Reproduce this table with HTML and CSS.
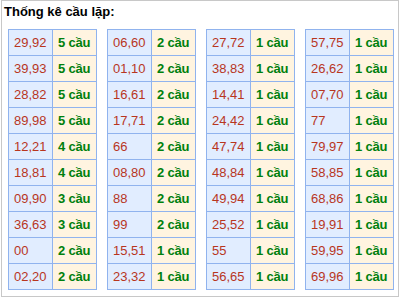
FILE: index.html
```html
<!DOCTYPE html>
<html>
<head>
<meta charset="utf-8">
<link rel="stylesheet" href="styles.css">
</head>
<body>
<div class="box">
  <div class="title">Thống kê cầu lặp:</div>
  <div class="tables">
    <table class="tk">
      <tr><td class="num">29,92</td><td class="cnt">5 cầu</td></tr>
      <tr><td class="num">39,93</td><td class="cnt">5 cầu</td></tr>
      <tr><td class="num">28,82</td><td class="cnt">5 cầu</td></tr>
      <tr><td class="num">89,98</td><td class="cnt">5 cầu</td></tr>
      <tr><td class="num">12,21</td><td class="cnt">4 cầu</td></tr>
      <tr><td class="num">18,81</td><td class="cnt">4 cầu</td></tr>
      <tr><td class="num">09,90</td><td class="cnt">3 cầu</td></tr>
      <tr><td class="num">36,63</td><td class="cnt">3 cầu</td></tr>
      <tr><td class="num">00</td><td class="cnt">2 cầu</td></tr>
      <tr><td class="num">02,20</td><td class="cnt">2 cầu</td></tr>
    </table>
    <table class="tk">
      <tr><td class="num">06,60</td><td class="cnt">2 cầu</td></tr>
      <tr><td class="num">01,10</td><td class="cnt">2 cầu</td></tr>
      <tr><td class="num">16,61</td><td class="cnt">2 cầu</td></tr>
      <tr><td class="num">17,71</td><td class="cnt">2 cầu</td></tr>
      <tr><td class="num">66</td><td class="cnt">2 cầu</td></tr>
      <tr><td class="num">08,80</td><td class="cnt">2 cầu</td></tr>
      <tr><td class="num">88</td><td class="cnt">2 cầu</td></tr>
      <tr><td class="num">99</td><td class="cnt">2 cầu</td></tr>
      <tr><td class="num">15,51</td><td class="cnt">1 cầu</td></tr>
      <tr><td class="num">23,32</td><td class="cnt">1 cầu</td></tr>
    </table>
    <table class="tk">
      <tr><td class="num">27,72</td><td class="cnt">1 cầu</td></tr>
      <tr><td class="num">38,83</td><td class="cnt">1 cầu</td></tr>
      <tr><td class="num">14,41</td><td class="cnt">1 cầu</td></tr>
      <tr><td class="num">24,42</td><td class="cnt">1 cầu</td></tr>
      <tr><td class="num">47,74</td><td class="cnt">1 cầu</td></tr>
      <tr><td class="num">48,84</td><td class="cnt">1 cầu</td></tr>
      <tr><td class="num">49,94</td><td class="cnt">1 cầu</td></tr>
      <tr><td class="num">25,52</td><td class="cnt">1 cầu</td></tr>
      <tr><td class="num">55</td><td class="cnt">1 cầu</td></tr>
      <tr><td class="num">56,65</td><td class="cnt">1 cầu</td></tr>
    </table>
    <table class="tk">
      <tr><td class="num">57,75</td><td class="cnt">1 cầu</td></tr>
      <tr><td class="num">26,62</td><td class="cnt">1 cầu</td></tr>
      <tr><td class="num">07,70</td><td class="cnt">1 cầu</td></tr>
      <tr><td class="num">77</td><td class="cnt">1 cầu</td></tr>
      <tr><td class="num">79,97</td><td class="cnt">1 cầu</td></tr>
      <tr><td class="num">58,85</td><td class="cnt">1 cầu</td></tr>
      <tr><td class="num">68,86</td><td class="cnt">1 cầu</td></tr>
      <tr><td class="num">19,91</td><td class="cnt">1 cầu</td></tr>
      <tr><td class="num">59,95</td><td class="cnt">1 cầu</td></tr>
      <tr><td class="num">69,96</td><td class="cnt">1 cầu</td></tr>
    </table>
  </div>
</div>
</body>
</html>
```
FILE: styles.css
```css
html, body {
  margin: 0;
  padding: 0;
  background: #ffffff;
}
body {
  font-family: "Liberation Sans", Arial, sans-serif;
}
.box {
  margin-left: 1px;
  width: 396px;
  height: 295px;
  border: 1px solid #c8c8c8;
  box-sizing: content-box;
}
.title {
  font-size: 13px;
  font-weight: bold;
  color: #000;
  line-height: 15px;
  padding: 3px 0 0 2px;
  height: 15px;
}
.tables {
  display: flex;
  justify-content: space-between;
  margin: 10px 4px 0 6px;
}
.tk {
  border-collapse: collapse;
  width: 89px;
  table-layout: fixed;
}
.tk td {
  border: 1px solid #90b3ee;
  height: 25px;
  padding: 0 0 0 5px;
  font-size: 13px;
  line-height: 15px;
  text-align: left;
  vertical-align: middle;
  white-space: nowrap;
}
.tk td.num {
  width: 38px;
  background: #e1edff;
  color: #b8361e;
}
.tk td.cnt {
  background: #fff4e0;
  color: #00800d;
  font-weight: bold;
  letter-spacing: -0.2px;
}
```
